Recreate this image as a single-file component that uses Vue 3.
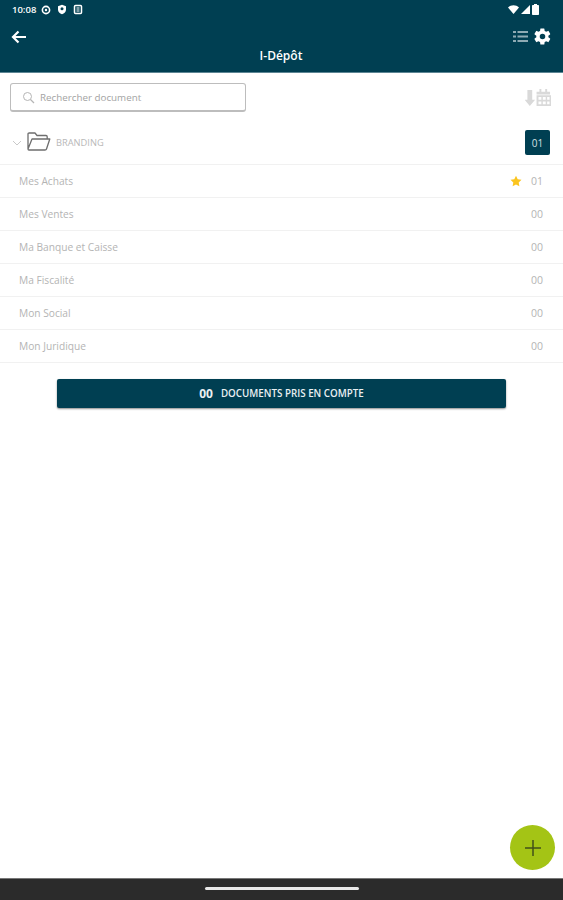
<script setup>
const rows = [
  { name: 'Mes Achats', count: '01', star: true },
  { name: 'Mes Ventes', count: '00' },
  { name: 'Ma Banque et Caisse', count: '00' },
  { name: 'Ma Fiscalité', count: '00' },
  { name: 'Mon Social', count: '00' },
  { name: 'Mon Juridique', count: '00' },
]
</script>

<template>
  <div class="page">
    <header class="header">
      <div class="status">
        <div class="status-left">
          <span class="time">10:08</span>
          <svg width="10" height="10" viewBox="0 0 10 10"><circle cx="5" cy="5" r="3.6" fill="none" stroke="#fff" stroke-width="1.6"/><circle cx="5" cy="5" r="1.2" fill="#fff"/></svg>
          <svg width="10" height="11" viewBox="0 0 10 11"><path d="M5 .8 9 2.2v3.2C9 7.8 7.300 9.400 5 10.200 2.700 9.400 1 7.800 1 5.400V2.200z" fill="#fff"/><circle cx="5" cy="4.800" r="1.500" fill="#003f52"/></svg>
          <svg width="10" height="11" viewBox="0 0 10 11"><rect x="1.500" y="1.500" width="7" height="8" rx="1" fill="none" stroke="#fff" stroke-width="1.500"/><rect x="3.500" y="3" width="3" height="5" fill="#fff" opacity=".5"/></svg>
        </div>
        <div class="status-right">
          <svg width="11" height="9" viewBox="0 0 11 9"><path d="M0 2.500C3 -.5 8 -.5 11 2.500L5.500 9z" fill="#fff"/></svg>
          <svg width="9" height="9" viewBox="0 0 9 9"><path d="M9 0v9H0z" fill="#fff"/></svg>
          <svg width="7" height="11" viewBox="0 0 7 11"><path d="M2 0h3v1h1.200q.8 0 .8 .8V10.200q0 .8-.8 .8H.8Q0 11 0 10.200V1.800Q0 1 .8 1H2z" fill="#fff"/></svg>
        </div>
      </div>
      <div class="toolbar">
        <svg class="back" width="16" height="14" viewBox="0 0 16 14"><path d="M15 7H2.500M7.500 1.500 2 7l5.500 5.500" fill="none" stroke="#fff" stroke-width="2.200"/></svg>
        <div class="tools">
          <svg width="15" height="13" viewBox="0 0 15 13" fill="#8fabb4"><rect x="0" y="1" width="3" height="2"/><rect x="4.500" y="1" width="10.500" height="2"/><rect x="0" y="5.500" width="3" height="2"/><rect x="4.500" y="5.500" width="10.500" height="2"/><rect x="0" y="10" width="3" height="2"/><rect x="4.500" y="10" width="10.500" height="2"/></svg>
          <svg width="19" height="19" viewBox="0 0 24 24"><path fill="#fff" d="M19.400 13c.04-.32.06-.66.06-1s-.02-.68-.07-1l2.160-1.680a.5.500 0 0 0 .12-.64l-2.040-3.540a.5.500 0 0 0-.62-.22l-2.550 1.020a7.500 7.500 0 0 0-1.720-1l-.38-2.700A.5.500 0 0 0 13.860 1.800H9.780a.5.500 0 0 0-.5.430l-.38 2.700c-.62.260-1.200.6-1.720 1L4.630 4.900a.5.500 0 0 0-.62.220L1.970 8.680a.5.500 0 0 0 .12.640L4.250 11c-.05.320-.08.670-.08 1s.02.680.07 1l-2.160 1.680a.5.500 0 0 0-.12.640l2.040 3.540c.13.220.39.300.62.220l2.550-1.020c.53.400 1.100.74 1.720 1l.38 2.700c.05.250.26.430.5.430h4.080c.25 0 .46-.18.500-.43l.38-2.700c.62-.26 1.200-.6 1.720-1l2.550 1.020c.23.090.49 0 .62-.22l2.040-3.540a.5.500 0 0 0-.12-.64zM12 15.500a3.500 3.500 0 1 1 0-7 3.500 3.500 0 0 1 0 7z"/></svg>
        </div>
      </div>
      <div class="title">I-Dépôt</div>
    </header>

    <section class="search-row">
      <div class="search">
        <svg width="13" height="13" viewBox="0 0 13 13"><circle cx="5.500" cy="5.500" r="4" fill="none" stroke="#b5b5b5" stroke-width="1"/><path d="M8.500 8.500 12 12" stroke="#b5b5b5" stroke-width="1.300"/></svg>
        <span>Rechercher document</span>
      </div>
      <svg class="sort" width="26" height="18" viewBox="0 0 27 20" preserveAspectRatio="none" fill="#d9d9d9">
        <path d="M2.500 1h5v11h3l-5.500 7-5.500-7h3z"/>
        <path d="M12 3h3V0h2v3h4V0h2v3h3v3H12z"/>
        <path fill-rule="evenodd" d="M12 7h15v12H12zM14 9v3h3V9zm4.500 0v3h3V9zm4.500 0v3h2.500V9zM14 14v3h3v-3zm4.500 0v3h3v-3zm4.500 0v3h2.500v-3z"/>
      </svg>
    </section>

    <section class="folder">
      <svg width="10" height="6" viewBox="0 0 10 6"><path d="M1 1l4 4 4-4" fill="none" stroke="#c9c9c9" stroke-width="1"/></svg>
      <svg class="folder-icon" width="24" height="19" viewBox="0 0 24 19"><path d="M1 17V2.200Q1 1 2.200 1H8l2 2.500h9q1.200 0 1.200 1.200V7M1 17 5 7h17.800L19.500 17Q19.200 18 18 18H2Q1 18 1 17z" fill="none" stroke="#6e6e6e" stroke-width="1.300" stroke-linejoin="round"/></svg>
      <span class="folder-name">BRANDING</span>
      <span class="badge">01</span>
    </section>

    <ul class="list">
      <li v-for="row in rows" :key="row.name" class="row">
        <span class="name">{{ row.name }}</span>
        <svg v-if="row.star" class="star" width="12" height="12" viewBox="0 0 24 24"><path fill="#fbc51f" d="M12 1.500l3.400 7 7.600 1-5.600 5.300 1.400 7.700-6.800-3.700-6.800 3.700 1.400-7.700L1 9.500l7.600-1z"/></svg>
        <span class="count">{{ row.count }}</span>
      </li>
    </ul>

    <div class="total">
      <b>00</b>
      <span>DOCUMENTS PRIS EN COMPTE</span>
    </div>

    <button class="fab" aria-label="Ajouter">
      <svg width="16" height="16" viewBox="0 0 16 16"><path d="M8 0v16M0 8h16" stroke="#41501a" stroke-width="1.500"/></svg>
    </button>

    <footer class="nav"><i class="pill"></i></footer>
  </div>
</template>

<style>
html, body { margin: 0; background: #fff; }
</style>

<style scoped>
.page {
  position: relative;
  width: 563px;
  height: 900px;
  display: flex;
  flex-direction: column;
  overflow: hidden;
  background: #fff;
  font-family: "Open Sans", sans-serif;
}
.header {
  height: 73px;
  flex: none;
  box-sizing: border-box;
  background: #003f52;
  border-bottom: 1px solid #5d8694;
  color: #fff;
  display: flex;
  flex-direction: column;
}
.status {
  height: 17px;
  padding: 1px 24px 0 12px;
  display: flex;
  justify-content: space-between;
  align-items: center;
}
.status-left { display: flex; align-items: center; gap: 6px; }
.status-right { display: flex; align-items: center; gap: 2px; }
.time { font-size: 9.500px; font-weight: 600; margin-right: -1px; }
.toolbar {
  height: 24px;
  margin-top: 7px;
  padding: 0 11px;
  display: flex;
  justify-content: space-between;
  align-items: center;
}
.tools { display: flex; align-items: center; gap: 5px; margin-bottom: 1px; }
.back { margin-bottom: 1px; }
.title {
  text-align: center;
  margin-top: -1px;
  padding-right: 1px;
  font-size: 12px;
  font-weight: 600;
  line-height: 16px;
}
.search-row {
  height: 29px;
  margin-top: 10px;
  padding: 0 12px 0 10px;
  display: flex;
  justify-content: space-between;
  align-items: center;
}
.search {
  width: 236px;
  height: 29px;
  box-sizing: border-box;
  border: 1px solid #bdbdbd;
  border-bottom-width: 2px;
  border-radius: 3px;
  padding-left: 11px;
  display: flex;
  align-items: center;
  gap: 5px;
  color: #a3a3a3;
  font-size: 9.800px;
}
.sort { margin-top: 1px; }
.folder {
  height: 53px;
  box-sizing: border-box;
  padding: 9px 13px 0 12px;
  border-bottom: 1px solid #f1f1f1;
  display: flex;
  align-items: center;
}
.folder-icon { margin: -3px 0 0 5px; }
.folder-name { margin-left: 5px; font-size: 9.300px; color: #b8b8b8; }
.badge {
  margin-left: auto;
  width: 25px;
  height: 25px;
  box-sizing: border-box;
  border-radius: 2px;
  background: #003f52;
  color: #d5e0e3;
  font-size: 10px;
  display: flex;
  align-items: center;
  justify-content: center;
}
.list { margin: 0; padding: 0; list-style: none; }
.row {
  height: 33px;
  box-sizing: border-box;
  padding: 0 20px 0 19px;
  border-bottom: 1px solid #f1f1f1;
  display: flex;
  align-items: center;
  font-size: 10.200px;
  color: #b4b4b4;
}
.star { margin: 0 9px 0 auto; }
.count { font-size: 10.500px; }
.name + .count { margin-left: auto; }
.total {
  width: 449px;
  height: 29px;
  margin: 16px 0 0 57px;
  box-sizing: border-box;
  border-radius: 2px;
  background: #003f52;
  box-shadow: 0 1px 2px rgba(0, 0, 0, .45);
  color: #eaf0f2;
  display: flex;
  align-items: center;
  justify-content: center;
  gap: 8px;
  font-size: 9.800px;
  font-weight: 600;
}
.total b { font-size: 12px; font-weight: 700; }
.fab {
  position: absolute;
  left: 510px;
  top: 825px;
  width: 45px;
  height: 45px;
  padding: 0;
  border: 0;
  border-radius: 50%;
  background: #a4c415;
  display: flex;
  align-items: center;
  justify-content: center;
}
.nav {
  margin-top: auto;
  height: 22px;
  box-sizing: border-box;
  background: #2b2b2b;
  border-top: 1px solid #777;
  display: flex;
  justify-content: center;
  padding-top: 8px;
}
.pill {
  width: 154px;
  height: 3px;
  border-radius: 2px;
  background: #e8e8e8;
}
</style>
